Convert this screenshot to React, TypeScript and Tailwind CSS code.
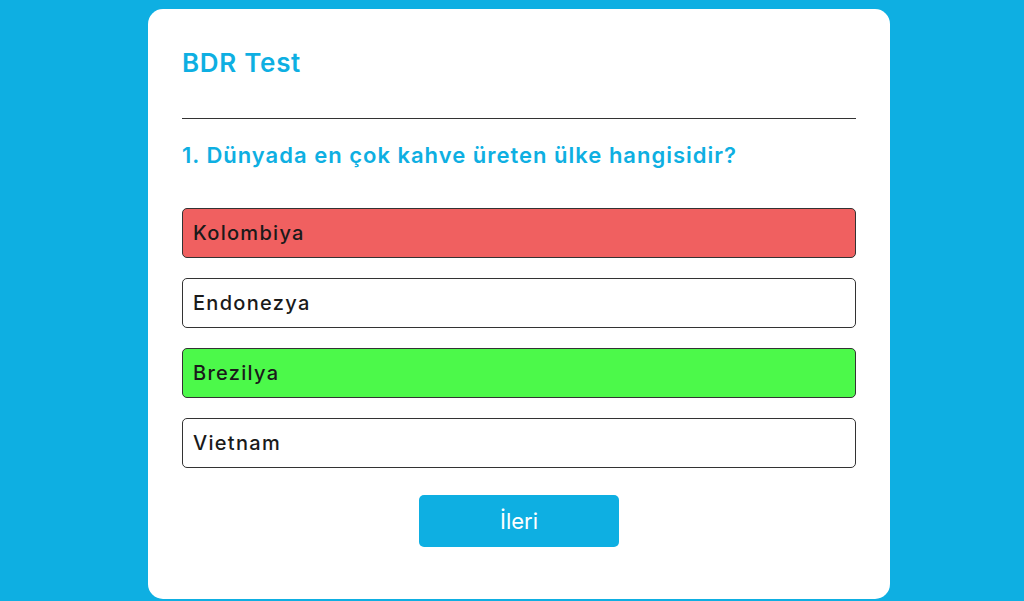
const options = [
  { label: 'Kolombiya', state: 'wrong' },
  { label: 'Endonezya', state: 'none' },
  { label: 'Brezilya', state: 'correct' },
  { label: 'Vietnam', state: 'none' },
]

export default function App() {
  return (
    <div className="min-h-screen bg-[#0eafe2] pt-[9px] font-['Inter',sans-serif]">
      <div className="ml-[148px] w-[742px] rounded-[15px] bg-white px-[34px] pb-[52px] pt-[39px]">
        <h1 className="h-[30px] text-[26px] leading-[30px] font-semibold tracking-[0.7px] text-[#0eafe2]">BDR Test</h1>
        <hr className="mt-[40px] border-t border-[#333]" />
        <h2 className="mt-[21px] h-[30px] text-[22px] leading-[30px] font-semibold tracking-[1px] text-[#0eafe2]">
          1. Dünyada en çok kahve üreten ülke hangisidir?
        </h2>
        <div className="mt-[38px] flex flex-col gap-[20px]">
          {options.map((opt) => (
            <div
              key={opt.label}
              className={`flex h-[50px] items-center rounded-[5px] border border-[#333] px-[10px] text-[20px] font-medium tracking-[1.3px] text-[#1a1a1a] ${
                opt.state === 'wrong' ? 'bg-[#f06060]' : opt.state === 'correct' ? 'bg-[#4cf94a]' : 'bg-white'
              }`}
            >
              {opt.label}
            </div>
          ))}
        </div>
        <div className="mt-[27px] flex justify-center">
          <button className="h-[52px] w-[200px] rounded-[5px] bg-[#0eafe2] text-[22px] text-white">İleri</button>
        </div>
      </div>
    </div>
  )
}
